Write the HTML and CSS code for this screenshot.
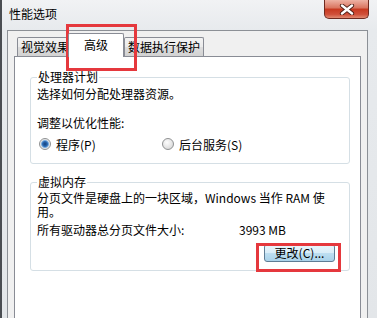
FILE: index.html
```html
<!DOCTYPE html>
<html lang="zh-CN">
<head>
  <meta charset="UTF-8">
  <title>性能选项</title>
  <link rel="stylesheet" href="styles.css">
</head>
<body>

  <div class="window">
    <!-- Title bar -->
    <div class="titlebar">
      <span class="title">性能选项</span>
      <button class="close-btn">
        <svg width="16" height="11" viewBox="0 0 16 11">
          <path d="M3 1.5 L13 9.5 M13 1.5 L3 9.5" stroke="#4a1c14" stroke-width="4.2" stroke-linecap="round"/>
          <path d="M3 1.5 L13 9.5 M13 1.5 L3 9.5" stroke="#ffffff" stroke-width="2.4" stroke-linecap="round"/>
        </svg>
      </button>
    </div>

    <div class="client">
      <div class="tabs">
        <div class="tab">视觉效果</div>
        <div class="tab active">高级</div>
        <div class="tab">数据执行保护</div>
      </div>

      <div class="panel">
        <fieldset class="group">
          <legend>处理器计划</legend>
          <p class="desc">选择如何分配处理器资源。</p>
          <p class="label">调整以优化性能:</p>
          <div class="radios">
            <label class="radio-item first"><span class="radio checked"></span>程序(P)</label>
            <label class="radio-item"><span class="radio"></span>后台服务(S)</label>
          </div>
        </fieldset>

        <fieldset class="group group-mem">
          <legend>虚拟内存</legend>
          <p class="wrap">分页文件是硬盘上的一块区域，Windows 当作 RAM 使<br>用。</p>
          <div class="size-row">
            <span class="size-label">所有驱动器总分页文件大小:</span>
            <span class="size-value">3993 MB</span>
          </div>
          <div class="btn-row">
            <button class="change-btn">更改(C)...</button>
          </div>
        </fieldset>
      </div>
    </div>
  </div>

  <!-- Red highlight marks -->
  <div class="mark mark-tab"></div>
  <div class="mark mark-btn"></div>

</body>
</html>
```

FILE: styles.css
```css
/* Global styles */
body {
  margin: 0;
  font-family: "Noto Sans CJK SC", sans-serif;
  font-size: 12px;
  color: #000;
  background: #fff;
}

/* Window frame */
.window {
  width: 377px;
  height: 318px;
  overflow: hidden;
  box-sizing: border-box;
  border-left: 2px solid #4a4d52;
  background: linear-gradient(#f1f2f4, #e7eaed 30px, #e3e6e9);
}

/* Title bar */
.titlebar {
  height: 30px;
  display: flex;
  align-items: flex-start;
}

.title {
  margin: 6px 0 0 7px;
  line-height: 16px;
}

.close-btn {
  margin-left: auto;
  margin-right: 8px;
  width: 45px;
  height: 19px;
  padding: 0;
  border: 1px solid #6e2a20;
  border-top: none;
  border-radius: 0 0 5px 5px;
  background: linear-gradient(#eeb2a4, #d9735e 45%, #c7381f 50%, #d0503a 80%, #e08a72);
  display: flex;
  align-items: center;
  justify-content: center;
}

/* Client area */
.client {
  margin-left: 5px;
  width: 361px;
  height: 288px;
  box-sizing: border-box;
  border: 1px solid #8c9096;
  border-bottom: none;
  background: #f0f0f0;
  padding: 2px 6px 0 6px;
}

/* Tabs */
.tabs {
  display: flex;
  align-items: flex-end;
  height: 23px;
  padding-left: 3px;
}

.tab {
  height: 18px;
  line-height: 18px;
  padding: 0 3px;
  border: 1px solid #898c95;
  border-bottom: none;
  border-radius: 2px 2px 0 0;
  background: linear-gradient(#f3f3f3, #ebebeb 50%, #dedede 50%, #d2d2d2);
}

.tab.active {
  height: 23px;
  line-height: 22px;
  padding: 0 15px;
  margin: 0 0 -1px -5px;
  background: #fff;
  position: relative;
  z-index: 1;
}

/* Tab panel */
.panel {
  height: 270px;
  border: 1px solid #898c95;
  background: #fff;
  padding: 0 10px 0 15px;
}

/* Group boxes */
.group {
  margin: 13px 0 0 0;
  padding: 0 6px 12px 6px;
  border: 1px solid #d5dfe5;
  border-radius: 3px;
  min-width: 0;
}

.group legend {
  padding: 0 1px;
  line-height: 14px;
}

.group-mem {
  margin-top: 11px;
  padding-bottom: 8px;
}

.desc {
  margin: 3px 0 0;
  line-height: 14px;
}

.label {
  margin: 15px 0 0;
  line-height: 14px;
}

/* Radio buttons */
.radios {
  display: flex;
  align-items: center;
  height: 14px;
  margin-top: 7px;
}

.radio-item {
  display: flex;
  align-items: center;
  gap: 5px;
}

.radio-item.first {
  width: 123px;
  margin-left: 2px;
}

.radio {
  width: 12px;
  height: 12px;
  box-sizing: border-box;
  border-radius: 50%;
  border: 1px solid #8f9192;
  background: radial-gradient(circle at 40% 35%, #fdfdfd, #d9d9d9 80%);
}

.radio.checked {
  background: radial-gradient(circle, #143f78 0, #2c6bb5 2.5px, #7fb0e0 3.6px, #d8dde2 4.3px, #f4f4f4 5px);
}

/* Virtual memory */
.wrap {
  margin: 2px 0 0;
  line-height: 14px;
}

.size-row {
  display: flex;
  margin-top: 4px;
  line-height: 14px;
}

.size-label {
  width: 202px;
}

.btn-row {
  display: flex;
  justify-content: flex-end;
  margin-top: 7px;
  padding-right: 8px;
}

.change-btn {
  width: 71px;
  height: 18px;
  padding: 0;
  font-family: "Noto Sans CJK SC", sans-serif;
  font-size: 12px;
  line-height: 16px;
  color: #000;
  border: 1px solid #5f7d95;
  border-radius: 3px;
  background: linear-gradient(#eaf5fb, #d9edf8 50%, #bedff1 50%, #a9d2ea);
}

/* Red highlight marks */
.mark {
  position: absolute;
  box-sizing: border-box;
  border: 3px solid #e5383d;
}

.mark-tab {
  left: 66px;
  top: 24px;
  width: 71px;
  height: 47px;
}

.mark-btn {
  left: 256px;
  top: 243px;
  width: 85px;
  height: 29px;
}
```
